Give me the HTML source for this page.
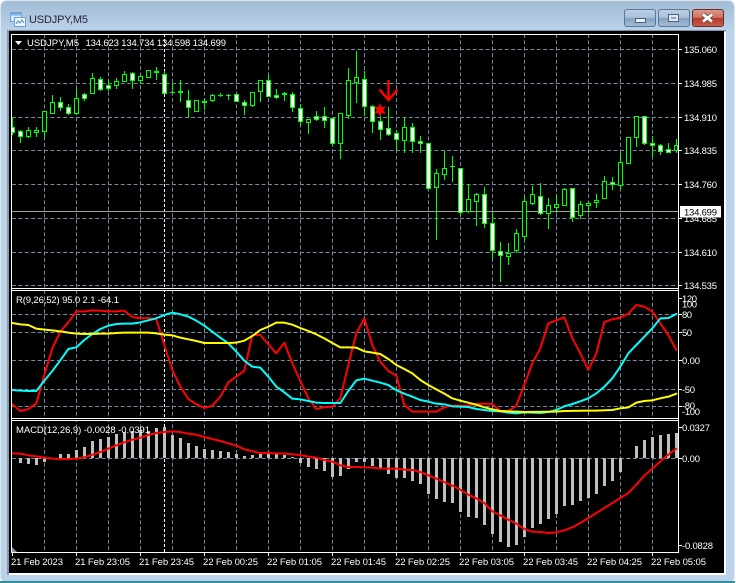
<!DOCTYPE html>
<html><head><meta charset="utf-8"><title>USDJPY,M5</title>
<style>
html,body{margin:0;padding:0;background:#fff;width:736px;height:583px;overflow:hidden}
svg{display:block}
text{font-family:"Liberation Sans",sans-serif;font-size:9.5px;fill:#fff}
.l{fill:none;stroke-width:6;stroke-linejoin:round;stroke-linecap:round}
</style></head><body>
<svg width="736" height="583" viewBox="0 0 736 583" xmlns="http://www.w3.org/2000/svg">
<defs>
<linearGradient id="t" gradientUnits="userSpaceOnUse" x1="0" y1="0" x2="0" y2="32"><stop offset="0" stop-color="#a3bcd6"/><stop offset="1" stop-color="#bad2ea"/></linearGradient>
<linearGradient id="b" x1="0" y1="0" x2="0" y2="1"><stop offset="0" stop-color="#bcd0e4"/><stop offset=".48" stop-color="#a9c0d9"/><stop offset=".52" stop-color="#86a2c0"/><stop offset="1" stop-color="#a4bed9"/></linearGradient>
<linearGradient id="c" x1="0" y1="0" x2="0" y2="1"><stop offset="0" stop-color="#dd9c8e"/><stop offset=".48" stop-color="#cc6f60"/><stop offset=".52" stop-color="#b53a2a"/><stop offset="1" stop-color="#c4604c"/></linearGradient>
</defs>
<rect x="0.5" y="0.5" width="734" height="582" rx="6" fill="#bad2ea" stroke="#dfe6ee"/>
<rect x="1" y="1" width="733" height="31" rx="6" fill="url(#t)"/>
<rect x="0" y="581" width="735" height="2" fill="#2f8f9f"/>
<rect x="7" y="30" width="719" height="545" fill="#fff"/>
<rect x="7" y="30" width="719" height="1.5" fill="#7f8f9f"/>
<rect x="7" y="30" width="2" height="545" fill="#8a98a6"/>
<rect x="9" y="31" width="715" height="542" fill="#000"/>

<!-- title -->
<g>
<rect x="10.5" y="12.5" width="11" height="9" fill="#dcebf8" stroke="#6d9fd0"/>
<rect x="11" y="13" width="10" height="2.5" fill="#7fb0e0"/>
<rect x="14.5" y="17.5" width="11" height="9" fill="#eef6fd" stroke="#6d9fd0"/>
<path d="M16 24l2-3 2 2 2-3 2 3" fill="none" stroke="#4f86c0"/>
</g>
<text x="29" y="23" textLength="59" style="font-size:11px;fill:#2a2438">USDJPY,M5</text>

<!-- buttons -->
<rect x="624.5" y="9.5" width="31" height="17" rx="2.5" fill="url(#b)" stroke="#5d7692"/>
<rect x="635.5" y="18.5" width="10" height="4" fill="#e8eef4" stroke="#50647c"/>
<rect x="658.5" y="9.5" width="31" height="17" rx="2.5" fill="url(#b)" stroke="#5d7692"/>
<rect x="668.5" y="14.5" width="10" height="7" fill="#dfe7ef" stroke="#50647c"/><rect x="671" y="17" width="5" height="2" fill="#8ea5bf"/>
<rect x="692.5" y="9.5" width="31" height="17" rx="2.5" fill="url(#c)" stroke="#6e2a24"/>
<path d="M703 14.5l9 7M712 14.5l-9 7" stroke="#5a3a3a" stroke-width="4.2"/>
<path d="M703 14.5l9 7M712 14.5l-9 7" stroke="#fff" stroke-width="2.8"/>

<!-- grid -->
<g fill="none" stroke="#778899" stroke-dasharray="4 2.4">
<path d="M12 49.5H678M12 83.5H678M12 117.5H678M12 150.5H678M12 184.5H678M12 218.5H678M12 252.5H678M12 285.5H678"/>
<path d="M12 314.5H678M12 332.5H678M12 360.5H678M12 389.5H678M12 406.5H678"/>
<path d="M12 458.5H678"/>
<path d="M44.5 34V552M76.5 34V552M108.5 34V552M140.5 34V552M172.5 34V552M204.5 34V552M236.5 34V552M268.5 34V552M300.5 34V552M332.5 34V552M364.5 34V552M396.5 34V552M428.5 34V552M460.5 34V552M492.5 34V552M524.5 34V552M556.5 34V552M588.5 34V552M620.5 34V552M652.5 34V552"/>
</g>
<path d="M164.5 34V552" stroke="#fff" fill="none" stroke-dasharray="3 2"/>
<path d="M12 211.5H678" stroke="#a0a0a0"/>

<!-- wicks -->
<path fill="none" stroke="#00ff00" d="M12.5 117V135M20.5 130V143M28.5 127V138M36.5 127V137M44.5 111V137M52.5 95V114M60.5 97V111M68.5 104V115M76.5 89V115M84.5 93V101M92.5 73V94M100.5 77V91M108.5 80V91M116.5 78V89M124.5 71V81M132.5 72V89M140.5 75V84M148.5 70V78M156.5 67V80M164.5 71V93M172.5 83V92M180.5 80V102M188.5 90V118M196.5 100V111M204.5 99V110M212.5 94V102M220.5 93V97M228.5 94V100M236.5 94V102M244.5 100V115M252.5 92V107M260.5 80V102M268.5 75V97M276.5 89V99M284.5 92V101M292.5 92V112M300.5 104V126M308.5 119V134M316.5 111V121M324.5 107V128M332.5 118V146M340.5 113V159M348.5 68V119M356.5 51V103M364.5 71V116M372.5 105V133M380.5 116V140M388.5 107V136M396.5 130V150M404.5 117V153M412.5 123V153M420.5 136V153M428.5 143V188M436.5 169V240M444.5 151V180M452.5 156V182M460.5 168V216M468.5 184V213M476.5 193V226M484.5 187V228M492.5 212V258M500.5 242V282M508.5 243V265M516.5 229V253M524.5 197V241M532.5 186V205M540.5 183V215M548.5 198V229M556.5 195V213M564.5 188V205M572.5 188V222M580.5 201V219M588.5 202V213M596.5 194V208M604.5 176V198M612.5 177V190M620.5 153V190M628.5 137V164M636.5 116V147M644.5 116V145M652.5 136V157M660.5 144V155M668.5 143V153M676.5 139V153"/>
<!-- hollow bodies -->
<path fill="#000" stroke="#00ff00" d="M26.5 130.5h4v6h-4zM34.5 130.5h4v2h-4zM42.5 111.5h4v20h-4zM50.5 102.5h4v11h-4zM74.5 98.5h4v15h-4zM90.5 78.5h4v15h-4zM114.5 81.5h4v4h-4zM122.5 74.5h4v7h-4zM138.5 76.5h4v4h-4zM146.5 70.5h4v7h-4zM194.5 100.5h4v11h-4zM210.5 95.5h4v5h-4zM250.5 92.5h4v13h-4zM258.5 80.5h4v11h-4zM306.5 119.5h4v3h-4zM338.5 113.5h4v30h-4zM346.5 80.5h4v35h-4zM354.5 77.5h4v5h-4zM402.5 127.5h4v13h-4zM434.5 173.5h4v14h-4zM442.5 168.5h4v6h-4zM466.5 199.5h4v12h-4zM474.5 194.5h4v7h-4zM506.5 253.5h4v3h-4zM514.5 233.5h4v17h-4zM522.5 201.5h4v35h-4zM530.5 194.5h4v9h-4zM546.5 205.5h4v8h-4zM554.5 204.5h4v3h-4zM562.5 189.5h4v16h-4zM578.5 204.5h4v11h-4zM586.5 203.5h4v2h-4zM594.5 200.5h4v2h-4zM602.5 181.5h4v17h-4zM618.5 162.5h4v23h-4zM626.5 137.5h4v26h-4zM634.5 116.5h4v21h-4zM674.5 145.5h3v5h-3z"/>
<!-- filled bodies -->
<path fill="#fff" stroke="#00ff00" d="M11.5 127.5h3v5h-3zM18.5 131.5h4v5h-4zM58.5 102.5h4v5h-4zM66.5 107.5h4v6h-4zM82.5 94.5h4v4h-4zM98.5 79.5h4v10h-4zM106.5 85.5h4v3h-4zM130.5 73.5h4v7h-4zM154.5 71.5h4v1h-4zM162.5 74.5h4v19h-4zM178.5 91.5h4v1h-4zM186.5 100.5h4v7h-4zM202.5 101.5h4v1h-4zM234.5 94.5h4v7h-4zM242.5 102.5h4v3h-4zM266.5 80.5h4v16h-4zM274.5 95.5h4v2h-4zM282.5 93.5h4v1h-4zM290.5 94.5h4v13h-4zM298.5 108.5h4v13h-4zM314.5 116.5h4v3h-4zM322.5 116.5h4v4h-4zM330.5 118.5h4v25h-4zM362.5 79.5h4v27h-4zM370.5 106.5h4v15h-4zM378.5 121.5h4v8h-4zM386.5 128.5h4v6h-4zM394.5 133.5h4v6h-4zM410.5 127.5h4v14h-4zM418.5 141.5h4v2h-4zM426.5 143.5h4v45h-4zM458.5 168.5h4v44h-4zM482.5 194.5h4v29h-4zM490.5 223.5h4v27h-4zM498.5 251.5h4v4h-4zM538.5 196.5h4v17h-4zM570.5 188.5h4v29h-4zM610.5 182.5h4v2h-4zM642.5 116.5h4v27h-4zM650.5 143.5h4v2h-4zM658.5 145.5h4v6h-4zM666.5 149.5h4v3h-4z"/>
<!-- dojis -->
<path fill="none" stroke="#00ff00" d="M170 92.5h5M218 95.5h5M226 95.5h5M450 166.5h5"/>

<!-- arrow and star -->
<path d="M388.5 80V100M379.5 89.5L388.5 100L397.5 89.5" fill="none" stroke="#ff0000" stroke-width="2.4"/>
<polygon fill="#ff0000" points="380,103 381.6,107.2 386,106 383.2,110 386,114 381.6,112.8 380,117 378.4,112.8 374,114 376.8,110 374,106 378.4,107.2"/>

<!-- indicator 1 -->
<g transform="translate(0,285) scale(.33333)">
<polyline class="l" stroke="#ff0000" points="37,358 61,378 85,372 109,355 133,270 157,190 181,140 205,112 229,80 253,79 277,76 301,77 325,79 349,79 373,77 397,96 421,100 445,99 469,103 493,180 517,255 541,305 565,342 589,358 613,369 637,362 661,335 685,292 709,275 733,257 757,150 781,150 805,178 829,205 853,173 877,235 901,288 925,340 949,372 973,367 997,365 1021,340 1045,240 1069,145 1093,100 1117,180 1141,230 1165,258 1189,272 1213,360 1237,380 1261,380 1285,380 1309,380 1333,367 1357,362 1381,362 1405,362 1429,357 1453,356 1477,357 1501,378 1525,378 1549,362 1573,300 1597,235 1621,190 1645,115 1669,106 1693,97 1717,160 1741,205 1765,255 1789,205 1813,111 1837,103 1861,98 1885,86 1909,60 1933,65 1957,80 1981,115 2005,150 2029,195"/>
<polyline class="l" stroke="#00ffff" points="37,315 61,317 85,318 109,318 133,287 157,258 181,226 205,192 229,187 253,165 277,147 301,132 325,122 349,117 373,116 397,116 421,112 445,106 469,100 493,90 517,83 541,88 565,95 589,107 613,122 637,140 661,158 685,175 709,200 733,227 757,245 781,248 805,275 829,305 853,322 877,341 901,343 925,348 949,353 973,354 997,354 1021,354 1045,318 1069,286 1093,281 1117,287 1141,293 1165,300 1189,316 1213,326 1237,335 1261,345 1285,350 1309,356 1333,358 1357,364 1381,365 1405,366 1429,372 1453,375 1477,378 1501,379 1525,383 1549,385 1573,382 1597,383 1621,384 1645,381 1669,375 1693,364 1717,357 1741,349 1765,340 1789,325 1813,305 1837,280 1861,245 1885,205 1909,180 1933,155 1957,130 1981,100 2005,99 2029,87"/>
<polyline class="l" stroke="#ffff00" points="37,114 61,118 85,120 109,131 133,134 157,136 181,139 205,143 229,146 253,147 277,147 301,146 325,146 349,144 373,143 397,143 421,143 445,143 469,145 493,149 517,151 541,158 565,163 589,168 613,174 637,174 661,174 685,174 709,173 733,167 757,153 781,135 805,125 829,113 853,113 877,119 901,129 925,138 949,148 973,160 997,174 1021,187 1045,187 1069,188 1093,199 1117,203 1141,207 1165,222 1189,240 1213,252 1237,265 1261,285 1285,300 1309,313 1333,326 1357,340 1381,347 1405,353 1429,359 1453,367 1477,373 1501,378 1525,379 1549,380 1573,381 1669,380 1693,378 1765,377 1789,377 1837,375 1861,370 1885,367 1909,353 1933,348 1957,346 1981,340 2005,335 2029,326"/>
</g>

<!-- MACD histogram -->
<path fill="none" stroke="#c0c0c0" stroke-width="3" d="M20.5 458V463M28.5 458V464M36.5 458V465M44.5 458V462M52.5 458V459M60.5 458V454M68.5 458V454M76.5 458V450M84.5 458V447M92.5 458V441M100.5 458V439M108.5 458V437M116.5 458V434M124.5 458V432M132.5 458V431M140.5 458V430M148.5 458V431M156.5 458V428M164.5 458V427M172.5 458V435M180.5 458V438M188.5 458V443M196.5 458V446M204.5 458V449M212.5 458V450M220.5 458V451M228.5 458V452M236.5 458V454M244.5 458V456M252.5 458V455M260.5 458V454M268.5 458V453M276.5 458V454M284.5 458V455M292.5 458V457M300.5 458V463M308.5 458V467M316.5 458V469M324.5 458V471M332.5 458V477M340.5 458V476M348.5 458V469M356.5 458V462M364.5 458V462M372.5 458V466M380.5 458V469M388.5 458V474M396.5 458V478M404.5 458V478M412.5 458V481M420.5 458V484M428.5 458V494M436.5 458V499M444.5 458V502M452.5 458V503M460.5 458V512M468.5 458V517M476.5 458V518M484.5 458V525M492.5 458V534M500.5 458V542M508.5 458V547M516.5 458V545M524.5 458V537M532.5 458V528M540.5 458V524M548.5 458V519M556.5 458V514M564.5 458V506M572.5 458V505M580.5 458V501M588.5 458V498M596.5 458V494M604.5 458V486M612.5 458V481M620.5 458V472M628.5 458V459M636.5 458V446M644.5 458V440M652.5 458V437M660.5 458V435M668.5 458V434M676.5 458V433"/>
<g transform="translate(0,433) scale(.33333)">
<polyline class="l" stroke="#ff0000" points="37,61 61,62 85,67 109,70 133,74 157,77 181,78 205,78 229,77 253,73 277,65 301,57 325,47 349,37 373,28 397,20 421,14 445,6 469,0 493,-3 517,-5 541,-3 565,2 589,5 613,12 637,18 661,24 685,31 709,38 733,49 757,55 781,60 805,60 829,61 853,62 877,64 901,66 925,71 949,74 973,81 997,86 1021,97 1045,102 1069,102 1093,103 1117,104 1141,107 1165,107 1189,107 1213,110 1237,111 1261,117 1285,127 1309,137 1333,147 1357,158 1381,170 1405,185 1429,196 1453,210 1477,235 1501,247 1525,260 1549,272 1573,288 1597,296 1621,297 1645,300 1669,298 1693,292 1717,283 1741,270 1765,255 1789,240 1813,225 1837,210 1861,195 1885,180 1909,155 1933,128 1957,107 1981,85 2005,65 2029,47"/>
</g>

<!-- panel gaps and borders -->
<rect x="11" y="34" width="668" height="1" fill="#fff"/>
<rect x="9" y="289" width="672" height="1" fill="#000"/>
<rect x="11" y="288" width="668" height="1" fill="#fff"/>
<rect x="11" y="290" width="668" height="1" fill="#fff"/>
<rect x="9" y="419" width="672" height="1" fill="#000"/>
<rect x="11" y="418" width="668" height="1" fill="#fff"/>
<rect x="11" y="420" width="668" height="1" fill="#fff"/>
<rect x="11" y="552" width="668" height="1" fill="#fff"/>
<rect x="11" y="34" width="1" height="519" fill="#fff"/>
<rect x="678" y="34" width="1" height="519" fill="#fff"/>
<polygon points="12,547 12,552 17,552" fill="#8294a8"/>

<!-- ticks -->
<path fill="none" stroke="#fff" d="M679 49.5h3M679 83.5h3M679 117.5h3M679 150.5h3M679 184.5h3M679 218.5h3M679 252.5h3M679 285.5h3M679 298.5h3M679 314.5h3M679 332.5h3M679 360.5h3M679 389.5h3M679 406.5h3M679 427.5h3M679 458.5h3M679 545.5h3M12.5 553v3M76.5 553v3M140.5 553v3M204.5 553v3M268.5 553v3M332.5 553v3M396.5 553v3M460.5 553v3M524.5 553v3M588.5 553v3M652.5 553v3"/>

<!-- header text -->
<polygon points="15,41 22,41 18.5,45" fill="#fff"/>
<text x="27" y="46" textLength="52">USDJPY,M5</text>
<text x="85.5" y="46" textLength="140.5">134.623 134.734 134.598 134.699</text>
<text x="16" y="303" textLength="103">R(9,26,52) 95.0 2.1 -64.1</text>
<text x="16" y="433" textLength="134">MACD(12,26,9) -0.0028 -0.0391</text>

<!-- price labels -->
<text x="684" y="53" textLength="33">135.060</text>
<text x="684" y="87" textLength="33">134.985</text>
<text x="684" y="121" textLength="33">134.910</text>
<text x="684" y="154" textLength="33">134.835</text>
<text x="684" y="188" textLength="33">134.760</text>
<text x="684" y="222" textLength="33">134.685</text>
<text x="684" y="256" textLength="33">134.610</text>
<text x="684" y="289" textLength="33">134.535</text>
<rect x="680" y="206" width="41" height="11.5" fill="#fff"/>
<text x="684" y="215.5" textLength="33" style="fill:#000">134.699</text>

<text x="682" y="302" textLength="15">120</text>
<text x="682" y="307.5" textLength="15">100</text>
<text x="682" y="318" textLength="10">80</text>
<text x="682" y="336" textLength="10">50</text>
<text x="682" y="364" textLength="18">0.00</text>
<text x="682" y="393" textLength="13">-50</text>
<text x="682" y="409" textLength="13">-80</text>
<text x="682" y="415" textLength="18">-100</text>
<text x="682" y="431" textLength="28">0.0327</text>
<text x="682" y="462" textLength="18">0.00</text>
<text x="682" y="549" textLength="31">-0.0828</text>

<!-- time labels -->
<text x="11" y="565" textLength="52">21 Feb 2023</text>
<text x="75" y="565" textLength="55">21 Feb 23:05</text>
<text x="139" y="565" textLength="55">21 Feb 23:45</text>
<text x="203" y="565" textLength="55">22 Feb 00:25</text>
<text x="267" y="565" textLength="55">22 Feb 01:05</text>
<text x="331" y="565" textLength="55">22 Feb 01:45</text>
<text x="395" y="565" textLength="55">22 Feb 02:25</text>
<text x="459" y="565" textLength="55">22 Feb 03:05</text>
<text x="523" y="565" textLength="55">22 Feb 03:45</text>
<text x="587" y="565" textLength="55">22 Feb 04:25</text>
<text x="651" y="565" textLength="55">22 Feb 05:05</text>
</svg>
</body></html>
